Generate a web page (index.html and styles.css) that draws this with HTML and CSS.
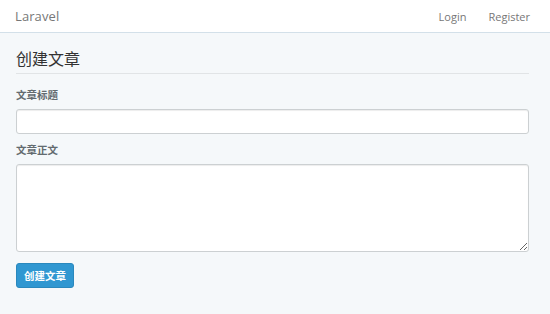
FILE: index.html
```html
<!DOCTYPE html>
<html lang="zh">
<head>
<meta charset="utf-8">
<title>Laravel</title>
<link rel="stylesheet" href="styles.css">
</head>
<body>
<nav class="navbar">
  <a class="brand" href="#">Laravel</a>
  <div class="nav-links">
    <a href="#">Login</a>
    <a href="#">Register</a>
  </div>
</nav>
<main class="container">
  <h1 class="title">创建文章</h1>
  <form class="form">
    <div class="group">
      <label class="label">文章标题</label>
      <input class="input" type="text">
    </div>
    <div class="group">
      <label class="label">文章正文</label>
      <textarea class="textarea"></textarea>
    </div>
    <button class="btn" type="button">创建文章</button>
  </form>
</main>
</body>
</html>
```
FILE: styles.css
```css
* { box-sizing: border-box; }
html, body { margin: 0; padding: 0; }
body {
  background: #f5f8fa;
  font-family: "Open Sans", "Noto Sans CJK SC", sans-serif;
  color: #636b6f;
  height: 314px;
  overflow: hidden;
}
.navbar {
  height: 33px;
  background: #fff;
  border-bottom: 1px solid #d3e0e9;
  display: flex;
  align-items: center;
  justify-content: space-between;
  padding: 0 20px 0 15px;
}
.brand {
  font-size: 13px;
  color: #777;
  text-decoration: none;
  letter-spacing: 0.1px;
}
.nav-links { display: flex; gap: 22px; }
.nav-links a {
  font-size: 11px;
  color: #777;
  text-decoration: none;
}
.container {
  padding: 0 21px 0 16px;
}
.title {
  margin: 15px 0 0;
  font-size: 16px;
  font-weight: 400;
  color: #333;
  line-height: 22px;
  padding-bottom: 3px;
  border-bottom: 1px solid #e1e4e6;
}
.form { margin-top: 14px; }
.group { margin-bottom: 9px; }
.label {
  display: block;
  font-size: 10.5px;
  font-weight: 700;
  color: #636b6f;
  line-height: 15px;
  margin-bottom: 6px;
}
.input, .textarea {
  display: block;
  width: 100%;
  background: #fff;
  border: 1px solid #ccd0d2;
  border-radius: 3px;
  box-shadow: inset 0 1px 1px rgba(0,0,0,0.075);
  font: inherit;
}
.input { height: 25px; }
.textarea { height: 88px; resize: vertical; }
.btn {
  margin-top: 2px;
  width: 58px;
  height: 25px;
  border: 1px solid #2a88bd;
  border-radius: 3px;
  background: #3097d1;
  color: #fff;
  font-family: "Noto Sans CJK SC", sans-serif;
  font-size: 10.5px;
  font-weight: 700;
  padding: 0;
}
```
